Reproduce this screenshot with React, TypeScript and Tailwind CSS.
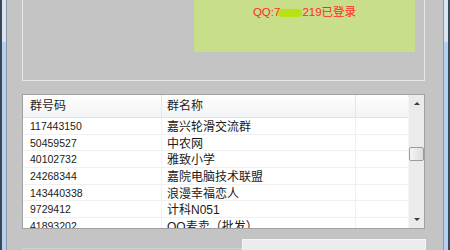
const groups = [
  { code: '117443150', name: '嘉兴轮滑交流群' },
  { code: '50459527', name: '中农网' },
  { code: '40102732', name: '雅致小学' },
  { code: '24268344', name: '嘉院电脑技术联盟' },
  { code: '143440338', name: '浪漫幸福恋人' },
  { code: '9729412', name: '计科N051' },
  { code: '41893202', name: 'QQ麦卖（批发）' },
];

const LeftEdge = () => (
  <div className="flex w-[7px] flex-none flex-col border-l-2 border-r border-l-[#3a4756] border-r-[#8b97a5]">
    <div className="h-[42px] bg-[#d9e5f3]" />
    <div className="flex-1 bg-[#b6d1ef]" />
  </div>
);

const RightEdge = () => (
  <div className="flex w-[7px] flex-none flex-col border-l border-r-2 border-l-[#8b97a5] border-r-[#3a4756]">
    <div className="h-[42px] bg-[#d9e5f3]" />
    <div className="flex-1 bg-[#b6d1ef]" />
  </div>
);

const ScrollBar = () => (
  <div className="flex w-[16px] flex-none flex-col border-l border-[#f4f4f4] bg-[#ebebeb]">
    <div className="flex h-[17px] items-center justify-center">
      <div className="h-0 w-0 border-x-[3px] border-b-[3px] border-x-transparent border-b-[#3c3c3c]" />
    </div>
    <div className="flex-1">
      <div className="mt-[35px] h-[14px] rounded-[2px] border border-[#9c9c9c] bg-gradient-to-r from-[#f6f6f6] to-[#dcdcdc]" />
    </div>
    <div className="flex h-[17px] items-center justify-center">
      <div className="h-0 w-0 border-x-[3px] border-t-[3px] border-x-transparent border-t-[#3c3c3c]" />
    </div>
  </div>
);

const GroupList = () => (
  <div className="mt-[13px] flex h-[135px] overflow-hidden border border-[#a0a0a0] bg-white">
    <div className="flex flex-1 flex-col overflow-hidden">
      <div className="grid h-[23px] flex-none grid-cols-[139px_194px_1fr] border-b border-[#e2e3e5] bg-gradient-to-b from-white to-[#f2f3f5] text-[12px] text-[#1e1e1e]">
        <div className="flex items-center border-r border-[#e6e6e6] pl-[7px]">群号码</div>
        <div className="flex items-center border-r border-[#e6e6e6] pl-[5px]">群名称</div>
        <div />
      </div>
      {groups.map((_group) => (
        <div
          key={_group.code}
          className="grid h-[16.67px] flex-none grid-cols-[139px_194px_1fr] border-b border-[#f0f0f0] text-[#1a1a1a]"
        >
          <div className="flex items-center border-r border-[#f0f0f0] pl-[7px] text-[10.5px]">{_group.code}</div>
          <div className="flex items-center border-r border-[#f0f0f0] pl-[5px] text-[12px]">{_group.name}</div>
          <div />
        </div>
      ))}
    </div>
    <ScrollBar />
  </div>
);

const App = () => {
  return (
    <div className="flex h-[250px] w-[450px] overflow-hidden bg-[#c4c4c4] font-['Liberation_Sans','Noto_Sans_CJK_SC',sans-serif]">
      <LeftEdge />
      <div className="flex min-w-0 flex-1 flex-col pl-[15px] pr-[18px]">
        <div className="flex h-[81px] flex-none items-start justify-end border-x border-b border-[#e6e9ee] pr-[9px]">
          <div className="flex h-[52px] w-[221px] justify-center bg-[#c9de88] pt-[6px]">
            <p className="text-[11.5px] leading-[13px] text-[#ff2a2a]">
              QQ:7
              <span className="-ml-[2px] inline-block h-[8px] w-[24px] rounded-[4px] bg-[#b9e214] align-[-1px]" />
              219已登录
            </p>
          </div>
        </div>
        <GroupList />
        <div className="mt-[10px] flex flex-1">
          <div className="mt-[9px] w-[220px] border-t border-[#d2d2d2]" />
          <div className="-mr-[1px] flex-1 border-x border-t border-[#f6f6f6] bg-[#ececec]" />
        </div>
      </div>
      <RightEdge />
    </div>
  );
};

export default App;
